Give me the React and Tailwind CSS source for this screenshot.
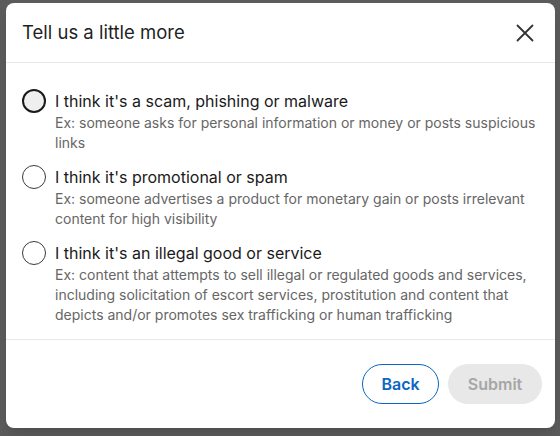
import { useState } from 'react';

const options = [
  {
    id: 'scam',
    label: "I think it's a scam, phishing or malware",
    desc: 'Ex: someone asks for personal information or money or posts suspicious links',
  },
  {
    id: 'spam',
    label: "I think it's promotional or spam",
    desc: 'Ex: someone advertises a product for monetary gain or posts irrelevant content for high visibility',
  },
  {
    id: 'illegal',
    label: "I think it's an illegal good or service",
    desc: 'Ex: content that attempts to sell illegal or regulated goods and services, including solicitation of escort services, prostitution and content that depicts and/or promotes sex trafficking or human trafficking',
  },
];

export default function App() {
  const [selected, setSelected] = useState(null);

  return (
    <div
      className="w-[560px] h-[436px] bg-[#5b5b5b] pt-[3px] pl-[6px] overflow-hidden"
      style={{ fontFamily: 'Inter, "Noto Sans", sans-serif' }}
    >
      <div className="w-[549px] h-[425px] bg-white rounded-[8px] shadow-lg flex flex-col">
        <div className="h-[60px] shrink-0 flex items-center justify-between pl-[16px] pr-[18px] border-b border-[#e8e8e8]">
          <h2 className="text-[18.5px] text-[#1f1f1f] pt-[1px]">Tell us a little more</h2>
          <button className="w-[24px] h-[24px] flex items-center justify-center text-[#333]">
            <svg width="18" height="18" viewBox="0 0 18 18" fill="none" stroke="currentColor" strokeWidth="1.8" strokeLinecap="round">
              <path d="M1.5 1.5 L16.5 16.5 M16.5 1.5 L1.5 16.5" />
            </svg>
          </button>
        </div>

        <div className="flex-1 flex flex-col gap-[12px] px-[16px] pt-[26px] border-b border-[#e8e8e8]">
          {options.map((o, i) => (
            <label key={o.id} className="flex items-start gap-[9px] cursor-pointer" onClick={() => setSelected(o.id)}>
              <span
                className={
                  i === 0
                    ? 'w-[24px] h-[24px] rounded-full border-2 border-[#1a1a1a] bg-[#efefef] shrink-0'
                    : 'w-[24px] h-[24px] rounded-full border border-[#3a3a3a] bg-white shrink-0'
                }
              />
              <span className="flex flex-col">
                <span className="text-[16px] leading-[24px] text-[#1a1a1a]">{o.label}</span>
                <span className="text-[14px] leading-[20px] text-[#666]">{o.desc}</span>
              </span>
            </label>
          ))}
        </div>

        <div className="h-[88px] shrink-0 flex items-center justify-end gap-[9px] pr-[13px]">
          <button className="h-[40px] w-[77px] rounded-full border border-[#0a66c2] text-[#0a66c2] text-[16px] font-semibold">
            Back
          </button>
          <button className="h-[40px] w-[94px] rounded-full bg-[#e8e8e8] text-[#a6a6a6] text-[16px] font-semibold">
            Submit
          </button>
        </div>
      </div>
    </div>
  );
}
